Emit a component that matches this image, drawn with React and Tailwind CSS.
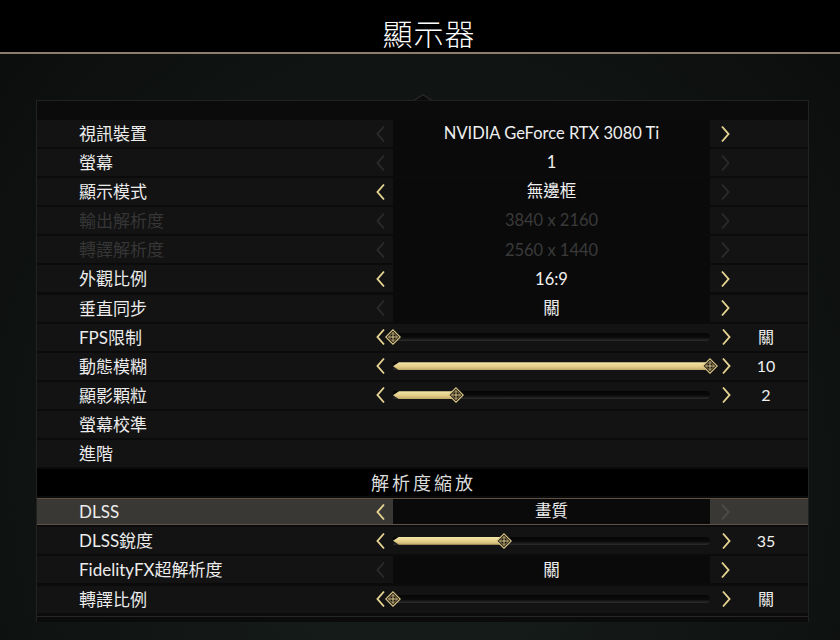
import React from "react";

const cjk = { fontFamily: "'Lato','Noto Sans CJK TC',sans-serif" };

// chevron arrows
function Chevron({ dir, on, dimColor = "#2b2b2b" }) {
    const d = dir === "left" ? "M10 1.5 L3.5 9 L10 16.5" : "M3 1.5 L9.5 9 L3 16.5";
    return (
        <svg width="13" height="18" viewBox="0 0 13 18">
            <path d={d} fill="none" stroke={on ? "#e6d593" : dimColor} strokeWidth="1.9" />
        </svg>
    );
}

function Knob() {
    return (
        <svg width="16" height="16" viewBox="0 0 16 16">
            <polygon points="8,0.8 15.2,8 8,15.2 0.8,8" fill="#14110c" stroke="#d8c487" strokeWidth="1.2" />
            <polygon points="8,3.5 12.5,8 8,12.5 3.5,8" fill="none" stroke="#b9a46a" strokeWidth="0.9" />
            <path d="M8 3.5 V12.5 M3.5 8 H12.5" stroke="#e2cf8e" strokeWidth="1" />
        </svg>
    );
}

function Slider({ value }) {
    return (
        <div className="relative h-[8px] w-full">
            <div className="absolute inset-x-0 top-0 h-[8px] rounded-r-full bg-[linear-gradient(to_bottom,#050505,#0b0b0b_55%,#2e2e2e)]" />
            {value > 0 && (
                <div
                    className="absolute left-0 top-0 h-[8px] bg-[linear-gradient(to_bottom,#f5e6a8,#e2cc86_60%,#bda466)] [clip-path:polygon(6px_0,100%_0,100%_100%,6px_100%,0_50%)]"
                    style={{ width: `${value}%` }}
                />
            )}
            <div className="absolute top-[-4px] -ml-[8px]" style={{ left: `${value}%` }}>
                <Knob />
            </div>
        </div>
    );
}

const rows = [
    { label: "視訊裝置", value: "NVIDIA GeForce RTX 3080 Ti", l: false, r: true },
    { label: "螢幕", value: "1", l: false, r: false },
    { label: "顯示模式", value: "無邊框", l: true, r: false },
    { label: "輸出解析度", value: "3840 x 2160", l: false, r: false, off: true },
    { label: "轉譯解析度", value: "2560 x 1440", l: false, r: false, off: true },
    { label: "外觀比例", value: "16:9", l: true, r: true },
    { label: "垂直同步", value: "關", l: false, r: true },
    { label: "FPS限制", slider: 0, l: true, r: true, side: "關" },
    { label: "動態模糊", slider: 100, l: true, r: true, side: "10" },
    { label: "顯影顆粒", slider: 20, l: true, r: true, side: "2" },
    { label: "螢幕校準" },
    { label: "進階" },
];

const rows2 = [
    { label: "DLSS", value: "畫質", l: true, r: false, sel: true },
    { label: "DLSS銳度", slider: 35, l: true, r: true, side: "35" },
    { label: "FidelityFX超解析度", value: "關", l: false, r: true },
    { label: "轉譯比例", slider: 0, l: true, r: true, side: "關" },
];

function Row({ row }) {
    const hasControl = row.value !== undefined || row.slider !== undefined;
    return (
        <div
            className={
                "flex h-[27px] items-center " +
                (row.sel ? "border-y border-[#5f5245] bg-[#3a3835]" : "bg-[#131313]")
            }
        >
            <div
                className={"w-[331px] pl-[42px] text-[17px] leading-none " + (row.off ? "text-[#363636]" : "text-[#ececec]")}
                style={cjk}
            >
                {row.label}
            </div>
            {hasControl && (
                <>
                    <div className="flex w-[25px] justify-center">
                        <Chevron dir="left" on={row.l} />
                    </div>
                    {row.slider !== undefined ? (
                        <div className="flex h-full w-[319px] items-center pr-[2px]">
                            <Slider value={row.slider} />
                        </div>
                    ) : (
                        <div
                            className={
                                "flex h-full w-[317px] items-center justify-center bg-[#0a0a0a] text-[16.5px] " +
                                (row.off ? "text-[#3a3a3a]" : "text-[#f0f0f0]")
                            }
                            style={cjk}
                        >
                            {row.value}
                        </div>
                    )}
                    <div className={"flex w-[28px] justify-center " + (row.slider !== undefined ? "" : "pl-[2px]")}>
                        <Chevron dir="right" on={row.r} dimColor={row.sel ? "#4f4d4a" : "#2b2b2b"} />
                    </div>
                    <div className="w-[52px] text-center text-[16px] text-[#f0f0f0]" style={cjk}>
                        {row.side}
                    </div>
                </>
            )}
        </div>
    );
}

export default function App() {
    return (
        <div className="flex h-[640px] w-[840px] flex-col overflow-hidden bg-[radial-gradient(ellipse_at_50%_75%,#19201d,#101412_60%,#0b0d0c)]">
            {/* titulo */}
            <div className="flex h-[52px] items-center justify-center bg-black pl-[18px] pt-[12px]">
                <h1
                    className="text-[30px] font-light leading-none tracking-[1px] text-white"
                    style={{ fontFamily: "'Noto Sans CJK TC',sans-serif" }}
                >
                    顯示器
                </h1>
            </div>
            <div className="h-[2px] bg-[#8c7d6d]" />

            <div className="relative ml-[36px] mt-[46px] w-[773px] border-x border-t border-[#222] bg-[#0b0b0b] pb-[5px] pt-[19px]">
                <svg className="absolute left-[377px] top-[-7px]" width="18" height="7" viewBox="0 0 18 7">
                    <path d="M0 6.5 L9 0.8 L18 6.5" fill="#0b0b0b" stroke="#2a2a2a" strokeWidth="1.2" />
                </svg>
                <div className="flex flex-col gap-[2.1px]">
                    {rows.map((row) => (
                        <Row key={row.label} row={row} />
                    ))}
                    <div className="flex h-[27px] items-center justify-center bg-black">
                        <span className="pl-[2px] text-[18px] leading-none tracking-[3px] text-[#dcdcdc]" style={cjk}>
                            解析度縮放
                        </span>
                    </div>
                    {rows2.map((row) => (
                        <Row key={row.label} row={row} />
                    ))}
                </div>
                <div className="mt-[3px] h-[1px] bg-[#262626]" />
            </div>
        </div>
    );
}
